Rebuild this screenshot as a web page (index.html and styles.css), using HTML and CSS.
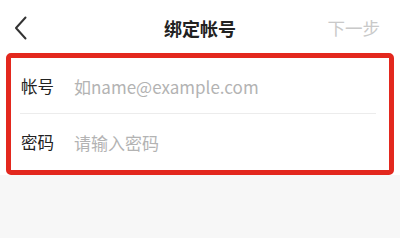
FILE: index.html
```html
<!DOCTYPE html>
<html lang="zh-CN">
<head>
    <meta charset="UTF-8">
    <meta name="viewport" content="width=device-width, initial-scale=1.0">
    <title>绑定帐号</title>
    <link rel="stylesheet" href="styles.css">
</head>
<body>

    <!-- Top bar -->
    <div class="nav-bar">
        <span class="back">
            <svg width="14" height="24" viewBox="0 0 14 24">
                <polyline points="11.5,1.5 2,12 11.5,22.5" fill="none" stroke="#333" stroke-width="2" stroke-linecap="round" stroke-linejoin="round"/>
            </svg>
        </span>
        <span class="title">绑定帐号</span>
        <span class="next">下一步</span>
    </div>

    <!-- Account form -->
    <div class="form-section">
        <div class="form-box">
            <div class="form-row">
                <label for="account">帐号</label>
                <input type="text" id="account" placeholder="如name@example.com">
            </div>
            <div class="divider"></div>
            <div class="form-row">
                <label for="password">密码</label>
                <input type="password" id="password" placeholder="请输入密码">
            </div>
        </div>
    </div>

</body>
</html>
```

FILE: styles.css
```css
body {
    margin: 0;
    width: 400px;
    height: 238px;
    background-color: #f7f7f7;
    font-family: "Noto Sans CJK SC", "Noto Sans", sans-serif;
    color: #222;
    overflow: hidden;
}

.nav-bar {
    height: 53px;
    background-color: #fff;
    display: flex;
    align-items: center;
    justify-content: space-between;
    padding: 0 20px 0 14px;
    position: relative;
}

    .nav-bar .back {
        display: flex;
        padding-top: 3px;
    }

    .nav-bar .title {
        position: absolute;
        left: 0;
        right: 0;
        text-align: center;
        font-size: 18px;
        font-weight: bold;
        padding-top: 2px;
        pointer-events: none;
    }

    .nav-bar .next {
        font-size: 17.5px;
        color: #c9c9c9;
        padding-top: 1px;
    }

.form-section {
    background-color: #fff;
    padding: 0 6px;
}

.form-box {
    border: 5px solid #e3281e;
    border-radius: 5px;
}

.form-row {
    height: 55px;
    display: flex;
    align-items: center;
    padding-left: 10px;
}

    .form-row label {
        width: 53px;
        font-size: 16.5px;
        color: #222;
    }

    .form-row input {
        flex: 1;
        border: none;
        outline: none;
        background: transparent;
        font-family: inherit;
        font-size: 17px;
        padding: 0;
        margin-top: 1px;
    }

        .form-row input::placeholder {
            color: #b3b3b3;
        }

.divider {
    height: 1px;
    background-color: #ececec;
    margin: 0 13px 0 9px;
}

.form-row + .divider + .form-row {
    height: 56px;
}
```
